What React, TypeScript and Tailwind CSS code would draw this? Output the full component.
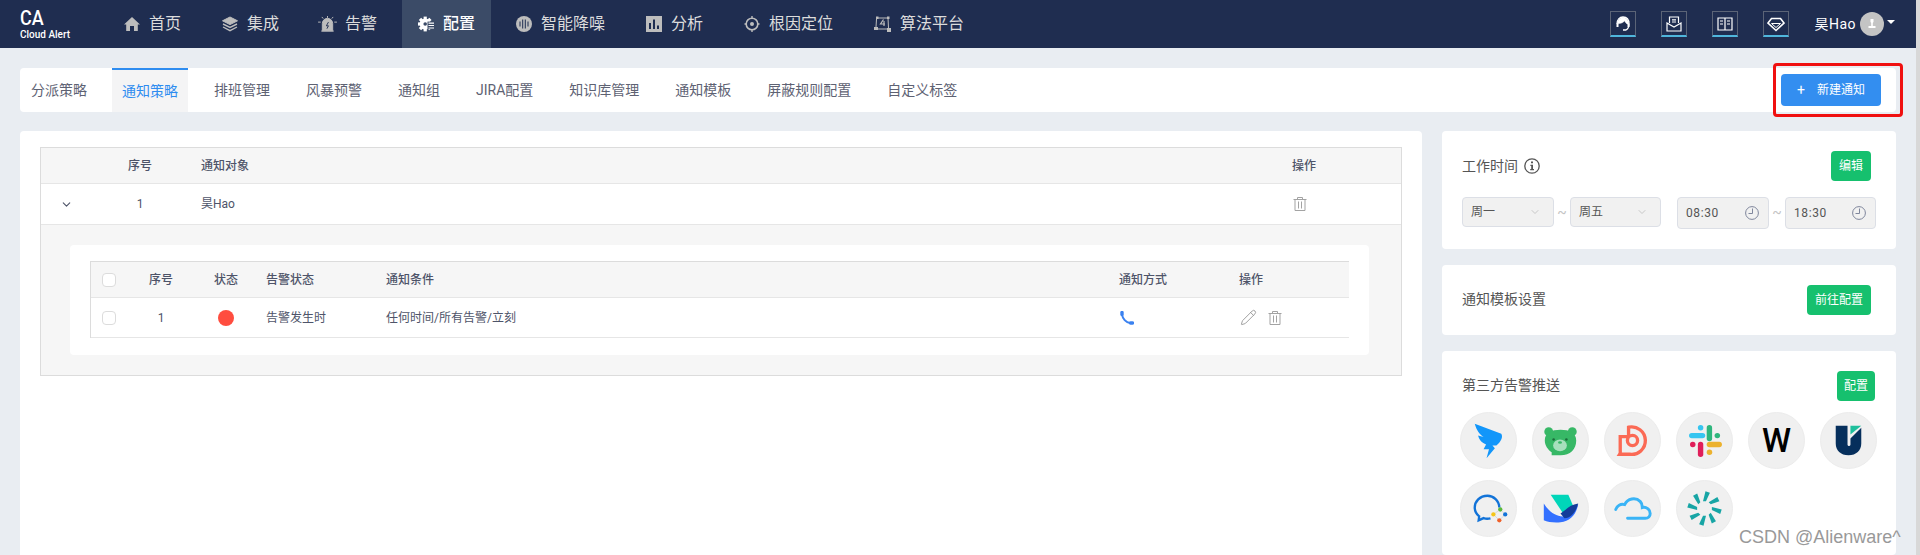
import React from "react";
import { ChevronDown, Pencil } from "lucide-react";

const navIconGrey = "#bdbdbd";
const navBg = "#1f2d50";

const HomeIcon = () => (
  <svg viewBox="0 0 16 16" className="w-4 h-4" fill={navIconGrey}>
    <path d="M8 1 L16 8.4 H13.8 V15 H10 V10 H6 V15 H2.2 V8.4 H0 Z" />
  </svg>
);

const LayersIcon = () => (
  <svg viewBox="0 0 16 16" className="w-4 h-4" fill="none" stroke={navIconGrey}>
    <path d="M8 1 L15.5 4.8 L8 8.6 L0.5 4.8 Z" fill={navIconGrey} />
    <path d="M1 8 L8 11.4 L15 8" strokeWidth="1.4" />
    <path d="M1 11 L8 14.6 L15 11" strokeWidth="1.4" />
  </svg>
);

const AlarmIcon = () => (
  <svg viewBox="0 0 20 17" className="w-[19px] h-4 shrink-0 -ml-0.5 -mr-px" fill="none" stroke={navIconGrey}>
    <path d="M4.500 15.500 V8 a5.500 5.500 0 0 1 11 0 V15.500 Z" fill={navIconGrey} />
    <path d="M3.500 16 H16.500" strokeWidth="1.4" />
    <path d="M11 6.500 L8.800 10.400 H11 L9.400 13.500" stroke={navBg} strokeWidth="1" />
    <path d="M10 0 V2 M4 1 L5.500 2.800 M16 1 L14.500 2.800 M0 6.500 H2.800 M17.200 6.500 H20" strokeWidth="1" />
  </svg>
);

const GearIcon = () => (
  <svg viewBox="0 0 16 16" className="w-4 h-4" fill="#fff">
    {[0, 45, 90, 135, 180, 225, 270, 315].map((a) => (
      <rect key={a} x="5.6" y="0.6" width="3.2" height="3.4" transform={`rotate(${a} 7.2 8)`} />
    ))}
    <circle cx="7.2" cy="8" r="5.6" />
    <circle cx="7.2" cy="8" r="1.8" fill="#3b4b67" />
    <rect x="9.5" y="5.6" width="6.5" height="7.6" fill="#3b4b67" />
    <path d="M10.5 6.6 H16 V7.7 H10.5 Z M10.5 9 H16 V10.1 H10.5 Z M10.5 11.4 H16 V12.5 H10.5 Z" />
  </svg>
);

const NoiseIcon = () => (
  <svg viewBox="0 0 16 16" className="w-4 h-4">
    <circle cx="8" cy="8" r="8" fill={navIconGrey} />
    <path d="M4 5.5 V10.5 M6.7 3.5 V12.5 M9.3 3.5 V12.5 M12 5.5 V10.5" stroke={navBg} strokeWidth="1" />
  </svg>
);

const BarsIcon = () => (
  <svg viewBox="0 0 16 16" className="w-4 h-4">
    <rect width="16" height="16" fill={navIconGrey} />
    <path d="M3 7 H5 V13 H3 Z M7 3.5 H9 V13 H7 Z M11 9.5 H13 V13 H11 Z" fill={navBg} />
  </svg>
);

const TargetIcon = () => (
  <svg viewBox="0 0 16 16" className="w-4 h-4" fill="none" stroke={navIconGrey}>
    <circle cx="8" cy="8" r="5.8" strokeWidth="1.6" />
    <circle cx="8" cy="8" r="2" fill={navIconGrey} stroke="none" />
    <path d="M8 0 V2.5 M8 13.5 V16 M0.5 8 H2.2 M13.8 8 H15.5" strokeWidth="1.4" />
  </svg>
);

const AlgoIcon = () => (
  <svg viewBox="0 0 17 16" className="w-[17px] h-4 shrink-0" fill={navIconGrey}>
    <rect x="2" y="0.5" width="2.5" height="2.5" />
    <rect x="13" y="0.5" width="2.5" height="2.5" />
    <rect x="0" y="11" width="4" height="3" />
    <rect x="13" y="12" width="4" height="4" />
    <path d="M3.5 2 H14 M14 2 L14.5 12 M2.5 3 L2 11 M4 13 H13" stroke={navIconGrey} strokeWidth="1" fill="none" />
    <path d="M9.5 3.5 L6.5 8 H11 M10 5 V10" stroke={navIconGrey} strokeWidth="1.2" fill="none" />
  </svg>
);

const HeadsetIcon = () => (
  <svg viewBox="0 0 16 16" className="w-4 h-4" fill="none" stroke="#fff">
    <path d="M2 8 C2 3.500 4.500 1 8 1 C11.500 1 14 3.500 14 8 C14 11 13 13 11 14 H8" strokeWidth="1.300" />
    <path d="M2.500 8 C2.500 3.800 5 1.500 8 1.500 C11 1.500 13.500 3.800 13.500 8 H12 C11 7 10 6 9.500 4.800 C8.500 6.500 6 7.500 4 7.500 Z" fill="#fff" strokeWidth="0.5" />
    <rect x="1.500" y="7.500" width="2" height="3.500" fill="#fff" stroke="none" />
    <rect x="12.500" y="7.500" width="2" height="3.500" fill="#fff" stroke="none" />
  </svg>
);

const MailIcon = () => (
  <svg viewBox="0 0 16 16" className="w-4 h-4" fill="none" stroke="#fff" strokeWidth="1.2">
    <path d="M3.5 7 V1 H12.5 V7" />
    <path d="M1 7 L8 11 L15 7 V15 H1 Z" />
    <path d="M6 3.8 H10 M6 6 H10" />
  </svg>
);

const BookIcon = () => (
  <svg viewBox="0 0 16 16" className="w-4 h-4" fill="none" stroke="#fff" strokeWidth="1.2">
    <path d="M1 2 H8 V14 H1 Z M8 2 H15 V14 H8 Z" />
    <path d="M3 5 H6 M3 8 H6 M10 5 H13 M10 8 H13" />
  </svg>
);

const DiamondIcon = () => (
  <svg viewBox="0 0 18 16" className="w-[18px] h-4" fill="none" stroke="#fff" strokeWidth="1.6">
    <path d="M4.5 2.5 H13.5 L17 7 L9 14.5 L1 7 Z" />
    <path d="M4.5 7.5 H13.5 L9 11.5 Z" strokeWidth="1" />
  </svg>
);

const TrashIcon = () => (
  <svg viewBox="0 0 14 14" className="w-[14px] h-[14px]" fill="none" stroke="#a3a3a3" strokeWidth="1">
    <path d="M0.5 2.5 H13.5 M4.5 2.5 V0.5 H9.5 V2.5 M2 2.5 V13.5 H12 V2.5 M5.5 4.5 V11.5 M8.5 4.5 V11.5" />
  </svg>
);

const PhoneIcon = () => (
  <svg viewBox="0 0 14 14" className="w-[14px] h-[14px]" fill="none" stroke="#3b82f0" strokeLinecap="round">
    <path d="M2 1.5 V3.5" strokeWidth="3.4" />
    <path d="M2 3.5 C2.5 7.5 6 11.5 10 12" strokeWidth="2" />
    <path d="M10.5 12 H12.5" strokeWidth="3.4" />
  </svg>
);

const ClockIcon = () => (
  <svg viewBox="0 0 14 14" className="w-[14px] h-[14px]" fill="none" stroke="#7f869c" strokeWidth="1">
    <circle cx="7" cy="7" r="6.4" />
    <path d="M7.5 2.5 V7.5 H3.5" />
  </svg>
);

const InfoIcon = () => (
  <svg viewBox="0 0 16 16" className="w-4 h-4" fill="none" stroke="#555">
    <circle cx="8" cy="8" r="7.2" strokeWidth="1.3" />
    <path d="M7 3.5 H9 V5.2 H7 Z M6.4 6.8 H9 V11 H10 V12.2 H6.2 V11 H7.2 V8 H6.4 Z" fill="#555" stroke="none" />
  </svg>
);

const Tick = () => (
  <span className="flex items-center justify-center w-4 h-[30px] shrink-0 text-sm text-[#c4c4c4]">~</span>
);

const navs = [
  { label: "首页", icon: <HomeIcon /> },
  { label: "集成", icon: <LayersIcon /> },
  { label: "告警", icon: <AlarmIcon /> },
  { label: "配置", icon: <GearIcon />, active: true },
  { label: "智能降噪", icon: <NoiseIcon /> },
  { label: "分析", icon: <BarsIcon /> },
  { label: "根因定位", icon: <TargetIcon /> },
  { label: "算法平台", icon: <AlgoIcon /> },
];

const tabs = ["分派策略", "通知策略", "排班管理", "风暴预警", "通知组", "JIRA配置", "知识库管理", "通知模板", "屏蔽规则配置", "自定义标签"];

const logos = [
  // dingtalk
  <svg key="ding" viewBox="0 0 56 56" className="w-full h-full">
    <path d="M14 11 L41 21 C43 24 41 29 36 33 H32 L34.5 36 L26 46 L28.5 37 H23 L25.5 32 C20 30 18 26 17.5 23 L23 24.5 C19 22 16 18 14 11 Z" fill="#1296fa" />
  </svg>,
  // bear
  <svg key="bear" viewBox="0 0 56 56" className="w-full h-full">
    <circle cx="16" cy="19" r="4.500" fill="#37b866" />
    <circle cx="40" cy="19" r="4.500" fill="#37b866" />
    <path d="M12 28 C12 20 19 17 28 17 C37 17 44 20 44 28 C44 37 38 43 28 43 H19 L19 40 C15 37 12 33 12 28 Z" fill="#37b866" />
    <ellipse cx="27.500" cy="33" rx="7" ry="6" fill="#a7e0bd" />
    <circle cx="21" cy="27" r="1.300" fill="#1c6d3c" />
    <circle cx="34" cy="27" r="1.300" fill="#1c6d3c" />
    <ellipse cx="27.500" cy="30" rx="2" ry="1.300" fill="#37b866" />
  </svg>,
  // red bubble
  <svg key="bubble" viewBox="0 0 56 56" className="w-full h-full" fill="none" stroke="#fb6a55" strokeWidth="3.400">
    <path d="M24 24 V14.500 A14 14 0 1 1 25 42 H15 C16 40.500 15.500 39 15.500 38 V24 H24" />
    <circle cx="28" cy="28" r="5.200" />
  </svg>,
  // slack
  <svg key="slack" viewBox="0 0 56 56" className="w-full h-full" fill="none" strokeLinecap="round" strokeWidth="5.500">
    <path d="M15 23 H26" stroke="#36c5f0" />
    <path d="M24 15 H24.100" stroke="#36c5f0" />
    <path d="M33 15 V26" stroke="#2eb67d" />
    <path d="M41 23 H41.100" stroke="#2eb67d" />
    <path d="M33 32 H43" stroke="#ecb22e" />
    <path d="M33 40 H33.100" stroke="#ecb22e" />
    <path d="M24 32 V42" stroke="#e01e5a" />
    <path d="M16 32 H16.100" stroke="#e01e5a" />
  </svg>,
  // W, real text
  <span key="w" className="font-['Roboto',sans-serif] font-medium text-[33px] leading-none text-black">W</span>,
  // shield U
  <svg key="u" viewBox="0 0 56 56" className="w-full h-full">
    <path d="M15 13 H27 V32 C27 34 30 34 30 32 V26 L41 15 V31 C41 38 36 43 28 43 C20 43 15 38 15 31 Z" fill="#062f5c" />
    <path d="M30 13 H41 L30 22 Z" fill="#1fbf9c" />
  </svg>,
  // wecom
  <svg key="wecom" viewBox="0 0 56 56" className="w-full h-full" fill="none">
    <path d="M39 27 C39 20 33 15 27 15 C19 15 14 21 14 27 C14 31 16 34 18.500 36 L18 40 L23 37.800 C25 38.500 28 38.500 30 38" stroke="#1273d8" strokeWidth="2.400" />
    <path d="M40 29 L33 34 L39 40 L45 34 Z" stroke="#d8d8d8" strokeWidth="1" />
    <circle cx="40" cy="29" r="2.200" fill="#5ab83a" />
    <circle cx="33" cy="34" r="2.200" fill="#f5c518" />
    <circle cx="39" cy="40" r="2.200" fill="#f0612a" />
    <circle cx="45" cy="34" r="2.200" fill="#1273d8" />
  </svg>,
  // feishu
  <svg key="feishu" viewBox="0 0 56 56" className="w-full h-full">
    <path d="M18 14 H36 L42 28 L30 32 Z" fill="#00d6b9" />
    <path d="M11 23 C16 31 24 37 32 36 C36 36 38 32 40 29 L46 24 C44 34 38 41 28 42 C22 42.500 15 42 11 40 Z" fill="#3370ff" />
    <path d="M28 33 C34 29 38 24 46 23 C44 31 39 38 32 38 Z" fill="#133c9a" />
  </svg>,
  // cloud
  <svg key="cloud" viewBox="0 0 56 56" className="w-full h-full" fill="none" stroke="#3ab4f6" strokeWidth="3" strokeLinecap="round">
    <path d="M11 29 C12 25 16 23 20 24 C23 18 31 16 36 21 C38 23 38 25 38 27 C42 26 46 29 46 33 C46 36 44 38 41 38 H23" />
  </svg>,
  // burst
  <svg key="burst" viewBox="0 0 56 56" className="w-full h-full" fill="#17a5a5">
    {[0, 45, 90, 135, 180, 225, 270, 315].map((a) => (
      <path key={a} d="M29 10.500 L33.500 12 L29.500 20.500 L26.500 20.500 Z" transform={`rotate(${a} 28 28)`} />
    ))}
  </svg>,
];

export default function App() {
  return (
    <div className="flex h-[555px] overflow-hidden bg-[#d8d8d8] font-['Roboto','Noto_Sans_CJK_SC',sans-serif]">
      <div className="relative flex flex-col w-[1916px] shrink-0 bg-[#e9edf2]">
        {/* Header */}
        <header className="flex items-center h-12 shrink-0 bg-[#1f2d50] text-[#dcdcdc]">
          <div className="w-[108px] shrink-0 pl-5 text-white">
            <div className="text-[20px] font-medium leading-[22px] scale-x-90 origin-left">CA</div>
            <div className="text-[10px] font-medium leading-3">Cloud Alert</div>
          </div>
          <nav className="flex gap-[9px]">
            {navs.map((n) => (
              <div
                key={n.label}
                className={
                  n.active
                    ? "flex items-center gap-[9px] h-12 px-4 text-base bg-[#3b4b67] text-white font-medium"
                    : "flex items-center gap-[9px] h-12 px-4 text-base"
                }
              >
                {n.icon}
                <span>{n.label}</span>
              </div>
            ))}
          </nav>
          <div className="ml-auto flex items-center pr-[21px]">
            <div className="flex gap-[25px] mr-[25px]">
              {[<HeadsetIcon key="a" />, <MailIcon key="b" />, <BookIcon key="c" />, <DiamondIcon key="d" />].map((icon, i) => (
                <div
                  key={i}
                  className="flex items-center justify-center w-[26px] h-[26px] border border-[#5b6477] border-b-2 border-b-[#4fb6dc]"
                >
                  {icon}
                </div>
              ))}
            </div>
            <span className="text-sm text-white tracking-[0.5px]">昊Hao</span>
            <div className="flex items-center justify-center w-6 h-6 ml-1 rounded-full bg-[#c4c4c4]">
              <svg viewBox="0 0 12 12" className="w-3 h-3" fill="#fff">
                <path d="M4.500 1 H7.500 V4 L6.800 4.800 V8 H9.500 V10 H2.500 V8 H5.200 V4.800 L4.500 4 Z" />
              </svg>
            </div>
            <div className="ml-[3px] w-0 h-0 border-x-4 border-x-transparent border-t-4 border-t-white mb-1" />
          </div>
        </header>

        {/* Content */}
        <div className="flex flex-col flex-1 min-h-0 px-5 pt-5">
          <div className="flex items-center justify-between h-11 shrink-0 pl-px pr-[15px] rounded bg-white">
            <div className="flex gap-4">
              {tabs.map((t) => (
                <div
                  key={t}
                  className={
                    t === "通知策略"
                      ? "flex items-center h-11 px-2.5 text-sm border-t-2 border-t-[#2e8cf0] bg-[#f4f4f5] text-[#2e8cf0]"
                      : "flex items-center h-11 px-2.5 text-sm text-[#5e6273] first:-mr-px"
                  }
                >
                  {t}
                </div>
              ))}
            </div>
            <button className="flex items-center justify-center gap-3 w-[100px] h-8 rounded-sm bg-[#338ef0] text-xs text-white">
              <span className="text-sm leading-none">+</span>
              新建通知
            </button>
          </div>

          <div className="flex flex-1 min-h-0 gap-5 mt-[19px]">
            {/* Left card */}
            <div className="flex-1 pt-4 pl-5 pr-5 rounded-t bg-white">
              <div className="border border-[#dcdcdc] text-xs text-[#4e5469]">
                <div className="grid grid-cols-[50px_98px_1103px_1fr] items-center h-9 border-b border-[#e6e6e6] bg-[#f6f6f6] font-medium">
                  <div />
                  <div className="text-center">序号</div>
                  <div className="pl-3">通知对象</div>
                  <div>操作</div>
                </div>
                <div className="grid grid-cols-[50px_98px_1103px_1fr] items-center h-[41px] border-b border-[#e6e6e6]">
                  <div className="flex justify-center">
                    <ChevronDown size={13} strokeWidth={2} color="#4e5469" />
                  </div>
                  <div className="text-center">1</div>
                  <div className="pl-3">昊Hao</div>
                  <div className="pl-px"><TrashIcon /></div>
                </div>
                <div className="pt-5 pb-5 pl-[29px] pr-8 bg-[#f6f6f6]">
                  <div className="pt-4 pb-[17px] px-5 rounded bg-white">
                    <div className="border-t border-l border-[#dcdcdc]">
                      <div className="grid grid-cols-[40px_60px_70px_120px_733px_120px_1fr] items-center h-9 border-b border-[#e6e6e6] bg-[#f6f6f6] font-medium">
                        <div className="pl-[11px]"><div className="w-3.5 h-3.5 rounded-sm border border-[#dcdcdc] bg-white" /></div>
                        <div className="text-center">序号</div>
                        <div className="text-center">状态</div>
                        <div className="pl-[5px]">告警状态</div>
                        <div className="pl-[5px]">通知条件</div>
                        <div className="pl-[5px]">通知方式</div>
                        <div className="pl-[5px]">操作</div>
                      </div>
                      <div className="grid grid-cols-[40px_60px_70px_120px_733px_120px_1fr] items-center h-10 border-b border-[#e6e6e6]">
                        <div className="pl-[11px]"><div className="w-3.5 h-3.5 rounded-sm border border-[#dcdcdc] bg-white" /></div>
                        <div className="text-center">1</div>
                        <div className="flex justify-center"><div className="w-4 h-4 rounded-full bg-[#ff4d3f]" /></div>
                        <div className="pl-[5px]">告警发生时</div>
                        <div className="pl-[5px]">任何时间/所有告警/立刻</div>
                        <div className="pl-[6px]"><PhoneIcon /></div>
                        <div className="flex items-center gap-[11px] pl-1.5">
                          <Pencil size={17} strokeWidth={1.2} color="#909090" />
                          <TrashIcon />
                        </div>
                      </div>
                    </div>
                  </div>
                </div>
              </div>
            </div>

            {/* Right column */}
            <div className="flex flex-col gap-4 w-[454px] shrink-0">
              <div className="pt-5 pb-5 pl-5 pr-[20px] rounded bg-white">
                <div className="flex items-center justify-between pr-[5px]">
                  <div className="flex items-center gap-1.5 text-sm text-[#555]">
                    工作时间 <InfoIcon />
                  </div>
                  <button className="w-10 h-[30px] rounded-sm bg-[#16c06e] text-xs text-white">编辑</button>
                </div>
                <div className="flex items-start mt-4 text-xs text-[#555]">
                  <div className="flex items-center justify-between w-[92px] h-[30px] px-2 rounded-sm border border-[#dcdfe6] bg-[#f1f1f1]">
                    周一 <ChevronDown size={12} color="#c8c8c8" className="mr-1" />
                  </div>
                  <Tick />
                  <div className="flex items-center justify-between w-[91px] h-[30px] px-2 rounded-sm border border-[#dcdfe6] bg-[#f1f1f1]">
                    周五 <ChevronDown size={12} color="#c8c8c8" className="mr-1" />
                  </div>
                  <div className="flex items-center justify-between w-[92px] h-8 ml-4 pl-2 pr-[9px] rounded-sm border border-[#dcdfe6] bg-[#f1f1f1] tracking-[0.6px]">
                    08:30 <ClockIcon />
                  </div>
                  <Tick />
                  <div className="flex items-center justify-between w-[91px] h-8 pl-2 pr-[9px] rounded-sm border border-[#dcdfe6] bg-[#f1f1f1] tracking-[0.6px]">
                    18:30 <ClockIcon />
                  </div>
                </div>
              </div>

              <div className="flex items-center justify-between h-[70px] pl-5 pr-[25px] rounded bg-white">
                <span className="pb-0.5 text-sm text-[#555]">通知模板设置</span>
                <button className="w-16 h-[30px] rounded-sm bg-[#16c06e] text-xs text-white">前往配置</button>
              </div>

              <div className="flex-1 pt-5 pl-[18px] pr-[21px] rounded bg-white">
                <div className="flex items-center justify-between pl-0.5">
                  <span className="pb-0.5 text-sm text-[#555]">第三方告警推送</span>
                  <button className="w-[38px] h-[30px] rounded-sm bg-[#16c06e] text-xs text-white">配置</button>
                </div>
                <div className="grid grid-cols-[repeat(6,57px)] gap-x-[15px] gap-y-[11px] mt-[11px]">
                  {logos.map((logo, i) => (
                    <div
                      key={i}
                      className="flex items-center justify-center w-[57px] h-[57px] rounded-full border border-[#ececec] bg-[#f0f0f0]"
                    >
                      {logo}
                    </div>
                  ))}
                </div>
              </div>
            </div>
          </div>
        </div>

        {/* Red annotation around the button */}
        <div className="absolute left-[1773px] top-[63px] w-[130px] h-[54px] rounded-sm border-[3px] border-[#f01010]" />

        {/* Watermark */}
        <div className="absolute left-[1739px] top-[526px] font-['Liberation_Sans',sans-serif] text-[18px] leading-[22px] text-[#999999]">
          CSDN @Alienware^
        </div>
      </div>
    </div>
  );
}
